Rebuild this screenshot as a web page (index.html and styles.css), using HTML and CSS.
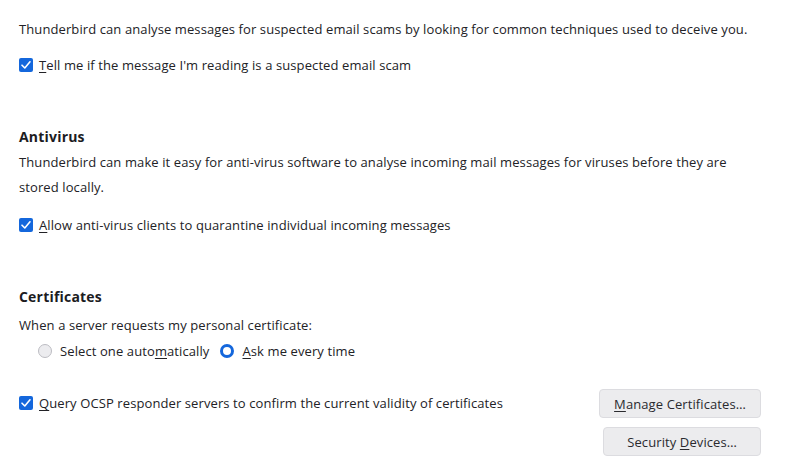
FILE: index.html
```html
<!DOCTYPE html>
<html>
<head>
<meta charset="utf-8">
<link rel="stylesheet" href="styles.css">
</head>
<body>
<div class="page">
  <p class="text first">Thunderbird can analyse messages for suspected email scams by looking for common techniques used to deceive you.</p>
  <label class="check row-scam">
    <span class="box"><svg viewBox="0 0 14 14" width="14" height="14"><path d="M3 7.2 L5.8 10 L11 3.8" fill="none" stroke="#fff" stroke-width="1.6" stroke-linecap="round" stroke-linejoin="round"/></svg></span>
    <span><u>T</u>ell me if the message I'm reading is a suspected email scam</span>
  </label>

  <section class="group">
    <h2 class="heading">Antivirus</h2>
    <p class="text para">Thunderbird can make it easy for anti-virus software to analyse incoming mail messages for viruses before they are stored locally.</p>
    <label class="check row-av">
      <span class="box"><svg viewBox="0 0 14 14" width="14" height="14"><path d="M3 7.2 L5.8 10 L11 3.8" fill="none" stroke="#fff" stroke-width="1.6" stroke-linecap="round" stroke-linejoin="round"/></svg></span>
      <span><u>A</u>llow anti-virus clients to quarantine individual incoming messages</span>
    </label>
  </section>

  <section class="group">
    <h2 class="heading">Certificates</h2>
    <p class="text when">When a server requests my personal certificate:</p>
    <div class="radios">
      <label class="radio"><span class="dot"></span><span>Select one auto<u>m</u>atically</span></label>
      <label class="radio"><span class="dot on"></span><span><u>A</u>sk me every time</span></label>
    </div>
    <div class="bottom">
      <label class="check row-ocsp">
        <span class="box"><svg viewBox="0 0 14 14" width="14" height="14"><path d="M3 7.2 L5.8 10 L11 3.8" fill="none" stroke="#fff" stroke-width="1.6" stroke-linecap="round" stroke-linejoin="round"/></svg></span>
        <span><u>Q</u>uery OCSP responder servers to confirm the current validity of certificates</span>
      </label>
      <div class="buttons">
        <button class="btn"><u>M</u>anage Certificates…</button>
        <button class="btn btn-sec">Security <u>D</u>evices…</button>
      </div>
    </div>
  </section>
</div>
</body>
</html>
```

FILE: styles.css
```css
html, body {
  margin: 0;
  padding: 0;
  background: #ffffff;
}
body {
  font-family: "Open Sans", "DejaVu Sans", sans-serif;
  font-size: 13px;
  letter-spacing: 0.1px;
  color: #222226;
}
.page {
  padding: 19px 29px 0 19px;
}
.text {
  margin: 0;
  line-height: 20px;
}
u {
  text-decoration: underline;
  text-underline-offset: 2px;
}
.check {
  display: flex;
  align-items: center;
  gap: 6px;
  height: 20px;
  line-height: 20px;
}
.row-scam {
  margin-top: 16px;
}
.box {
  width: 14px;
  height: 14px;
  border-radius: 2px;
  background: #1467dc;
  display: flex;
  flex: none;
}
.group {
  margin-top: 52px;
}
.heading {
  margin: 0;
  font-size: 14px;
  font-weight: 700;
  line-height: 20px;
  letter-spacing: 0.2px;
  color: #1c1c1f;
}
.para {
  margin-top: 3px;
  line-height: 25px;
}
.row-av {
  margin-top: 15px;
}
.when {
  margin-top: 8px;
}
.radios {
  display: flex;
  gap: 11px;
  margin-top: 6px;
  padding-left: 19px;
}
.radio {
  display: flex;
  align-items: center;
  gap: 8px;
  height: 20px;
}
.dot {
  width: 14px;
  height: 14px;
  box-sizing: border-box;
  border-radius: 50%;
  border: 1px solid #bcbcc2;
  background: #ececef;
  flex: none;
}
.dot.on {
  border: 3.5px solid #1467dc;
  background: #ffffff;
}
.bottom {
  display: flex;
  justify-content: space-between;
  align-items: flex-start;
  margin-top: 28px;
}
.row-ocsp {
  margin-top: 4px;
}
.buttons {
  display: flex;
  flex-direction: column;
  align-items: flex-end;
  gap: 9px;
}
.btn {
  font: inherit;
  letter-spacing: 0.1px;
  color: #2a2a2e;
  height: 29px;
  padding: 0 14px;
  border: 1px solid #dcdce0;
  border-radius: 4px;
  background: #ececee;
}
.btn-sec {
  padding: 0 23px;
}
```
